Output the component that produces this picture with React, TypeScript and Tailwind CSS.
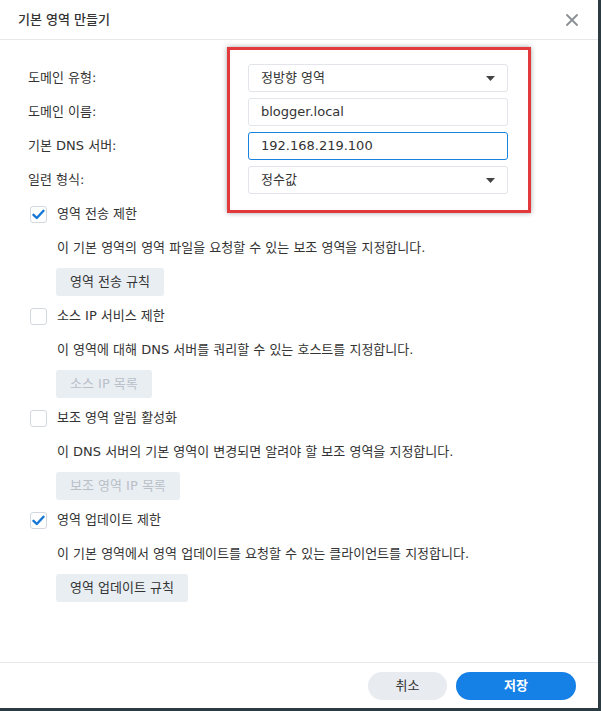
import React from "react";

const font = { fontFamily: '"DejaVu Sans", "Noto Sans CJK KR", sans-serif' };

function Check({ checked }: { checked: boolean }) {
  return (
    <span className="flex h-[17px] w-[17px] items-center justify-center rounded-[3px] border border-[#d3d8de] bg-white">
      {checked && (
        <svg width="13" height="11" viewBox="0 0 13 11">
          <path d="M1.5 5.8 L4.8 9 L11.5 1.8" fill="none" stroke="#1477d6" strokeWidth="2.4" strokeLinecap="round" strokeLinejoin="round" />
        </svg>
      )}
    </span>
  );
}

function Caret() {
  return (
    <svg width="9" height="5" viewBox="0 0 9 5">
      <path d="M0 0 H9 L4.5 5 Z" fill="#444" />
    </svg>
  );
}

function Field({ children, select, focus }: { children: React.ReactNode; select?: boolean; focus?: boolean }) {
  return (
    <div
      className={`flex h-[28px] w-[260px] items-center justify-between rounded-[3px] border bg-white pl-[12px] pr-[12px] text-[13px] text-[#333] ${
        focus ? "border-[#1a82dc]" : "border-[#e2e5e9]"
      }`}
    >
      <span>{children}</span>
      {select && <Caret />}
    </div>
  );
}

function Section({
  checked,
  label,
  desc,
  button,
  disabled,
}: {
  checked: boolean;
  label: string;
  desc: string;
  button: string;
  disabled?: boolean;
}) {
  return (
    <div className="flex flex-col">
      <div className="flex h-[18px] items-center">
        <div className="ml-[30px] w-[27px]">
          <Check checked={checked} />
        </div>
        <span className="text-[13px] text-[#333]">{label}</span>
      </div>
      <div className="ml-[57px] mt-[16px] h-[18px] text-[13px] leading-[18px] text-[#333]">{desc}</div>
      <div className="ml-[56px] mt-[11px] flex">
        <div
          className={`flex h-[28px] items-center rounded-[3px] bg-[#e9eef3] px-[14px] text-[13px] ${
            disabled ? "text-[#b9c0c8]" : "text-[#333]"
          }`}
        >
          {button}
        </div>
      </div>
    </div>
  );
}

const rows: [string, React.ReactNode][] = [
  ["도메인 유형:", <Field select>정방향 영역</Field>],
  ["도메인 이름:", <Field>blogger.local</Field>],
  ["기본 DNS 서버:", <Field focus>192.168.219.100</Field>],
  ["일련 형식:", <Field select>정수값</Field>],
];

export default function App() {
  return (
    <div className="h-[711px] w-[601px] bg-[#2c3b42]" style={font}>
      <div className="relative flex h-[708px] w-[598px] flex-col bg-white">
        {/* header */}
        <div className="flex h-[40px] items-center justify-between border-b border-[#e6e9ec] pl-[18px] pr-[20px]">
          <span className="text-[13px] font-medium text-[#333]">기본 영역 만들기</span>
          <svg width="12" height="12" viewBox="0 0 12 12">
            <path d="M1 1 L11 11 M11 1 L1 11" stroke="#8a8f95" strokeWidth="1.8" strokeLinecap="round" />
          </svg>
        </div>

        {/* body */}
        <div className="flex flex-1 flex-col">
          <div className="mt-[24px] flex flex-col gap-[6px]">
            {rows.map(([label, field], i) => (
              <div key={i} className="flex items-center">
                <div className="w-[248px] shrink-0 pl-[28px] text-[13px] text-[#333]">{label}</div>
                {field}
              </div>
            ))}
          </div>

          <div className="mt-[11px] flex flex-col gap-[11px]">
            <Section
              checked
              label="영역 전송 제한"
              desc="이 기본 영역의 영역 파일을 요청할 수 있는 보조 영역을 지정합니다."
              button="영역 전송 규칙"
            />
            <Section
              checked={false}
              label="소스 IP 서비스 제한"
              desc="이 영역에 대해 DNS 서버를 쿼리할 수 있는 호스트를 지정합니다."
              button="소스 IP 목록"
              disabled
            />
            <Section
              checked={false}
              label="보조 영역 알림 활성화"
              desc="이 DNS 서버의 기본 영역이 변경되면 알려야 할 보조 영역을 지정합니다."
              button="보조 영역 IP 목록"
              disabled
            />
            <Section
              checked
              label="영역 업데이트 제한"
              desc="이 기본 영역에서 영역 업데이트를 요청할 수 있는 클라이언트를 지정합니다."
              button="영역 업데이트 규칙"
            />
          </div>
        </div>

        {/* footer */}
        <div className="flex h-[46px] items-center justify-end gap-[9px] border-t border-[#e6e9ec] pr-[22px]">
          <div className="flex h-[28px] w-[79px] items-center justify-center rounded-full bg-[#e8ecf0] text-[13px] text-[#333]">
            취소
          </div>
          <div className="flex h-[28px] w-[120px] items-center justify-center rounded-full bg-[#1580e6] text-[13px] font-semibold text-white">
            저장
          </div>
        </div>

        {/* red highlight frame */}
        <div className="pointer-events-none absolute left-[227px] top-[47px] h-[166px] w-[304px] border-[3px] border-[#e2393c] shadow-[0_0_5px_rgba(0,0,0,0.35)]" />
      </div>
    </div>
  );
}
